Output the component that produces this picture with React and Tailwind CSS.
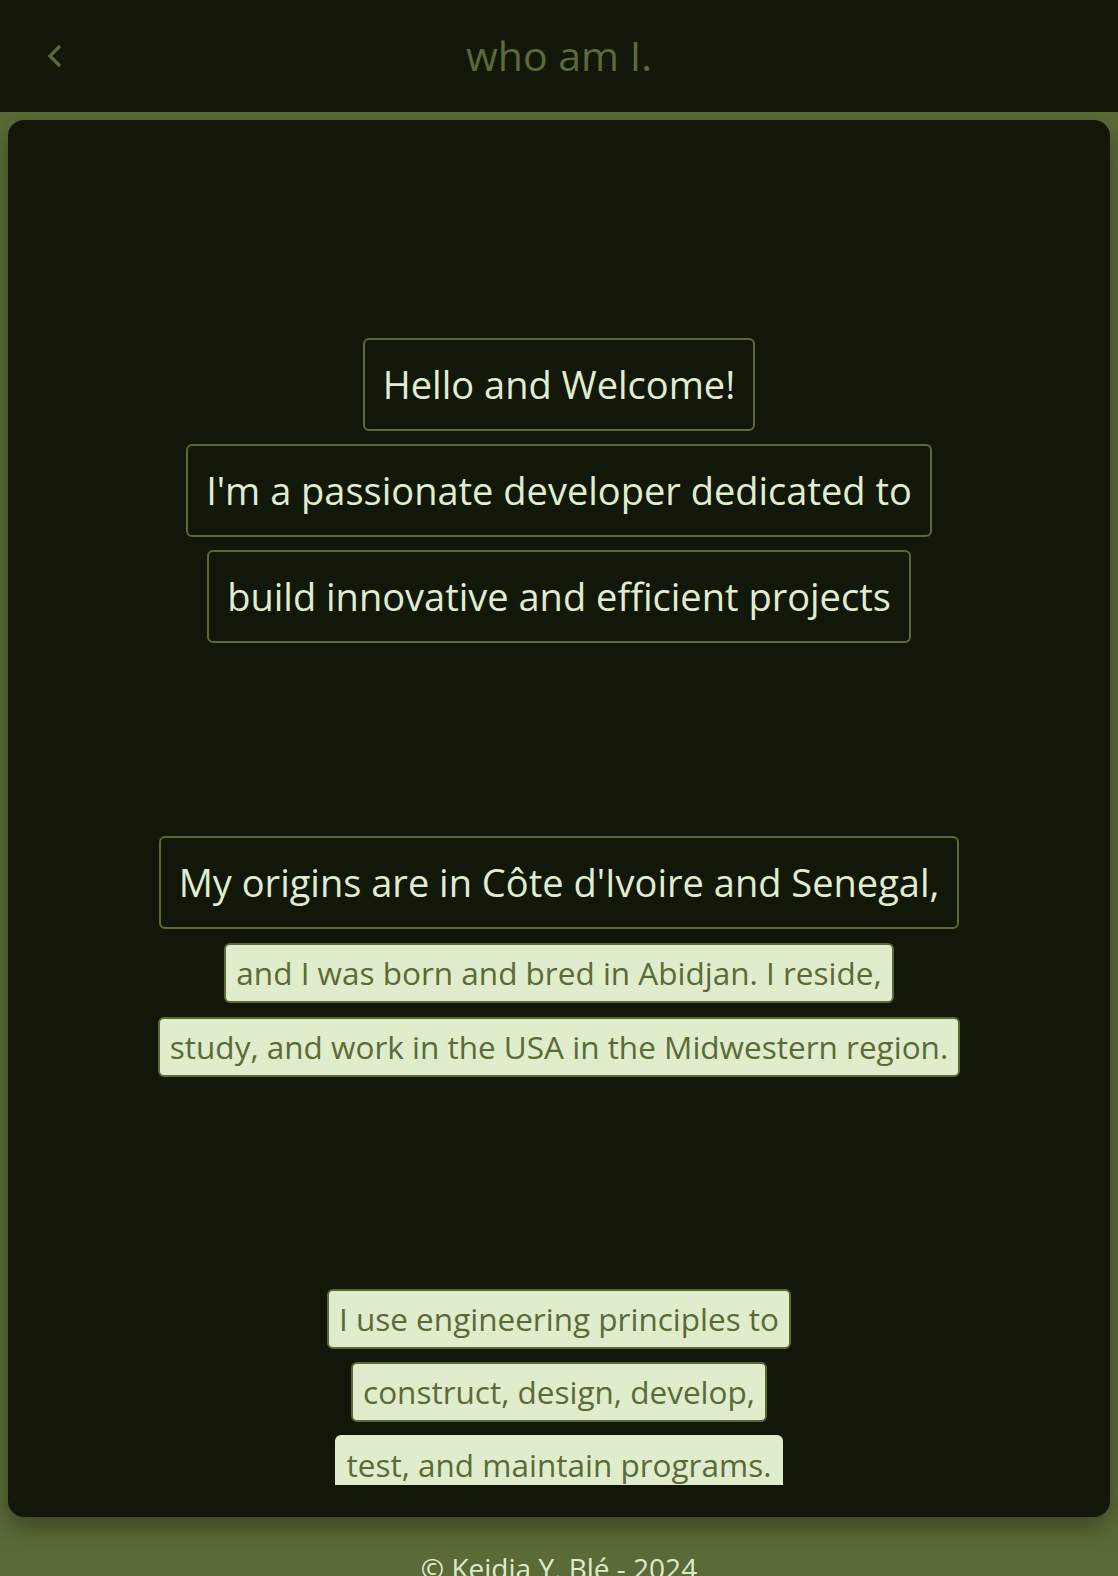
import React from 'react';

const FONT = { fontFamily: '"Open Sans", "Noto Sans", sans-serif' };

function BackIcon() {
  return (
    <svg width="16" height="24" viewBox="0 0 16 24" fill="none">
      <path d="M14 2 L4 12 L14 22" stroke="#5a6b37" strokeWidth="3.2" />
    </svg>
  );
}

function BigLine({ children }) {
  return (
    <div className="border-2 border-[#5a6b37] rounded-md px-[18px] py-[17px] text-[38px] leading-[55px] text-[#e2edcf] whitespace-nowrap">
      {children}
    </div>
  );
}

function SmallLine({ children, bare }) {
  return (
    <div
      className={
        'rounded-[6px] px-[10px] py-[8px] text-[31.5px] leading-[40px] bg-[#e0edcd] text-[#5a6b37] whitespace-nowrap border-2 ' +
        (bare ? 'border-[#e0edcd] rounded-b-none' : 'border-[#5a6b37]')
      }
    >
      {children}
    </div>
  );
}

export default function App() {
  return (
    <div className="w-full min-h-screen bg-[#5a6b37]" style={FONT}>
      <header className="h-[112px] bg-[#111709] flex items-center relative">
        <button className="absolute left-[46px] top-[44px] p-0">
          <BackIcon />
        </button>
        <div className="flex-1 text-center text-[41px] text-[#5a6b37]">
          who am I.
        </div>
      </header>

      <main className="p-2">
        <div className="h-[1397px] bg-[#111709] rounded-2xl p-8 shadow-[0_10px_24px_rgba(0,0,0,0.35)]">
          <div className="h-full overflow-hidden flex flex-col items-center">
            <div className="mt-[186px] flex flex-col items-center gap-[13px]">
              <BigLine>Hello and Welcome!</BigLine>
              <BigLine>I'm a passionate developer dedicated to</BigLine>
              <BigLine>build innovative and efficient projects</BigLine>
            </div>

            <div className="mt-[193px] flex flex-col items-center gap-[14px]">
              <BigLine>My origins are in Côte d'Ivoire and Senegal,</BigLine>
              <SmallLine>and I was born and bred in Abidjan. I reside,</SmallLine>
              <SmallLine>study, and work in the USA in the Midwestern region.</SmallLine>
            </div>

            <div className="mt-[212px] flex flex-col items-center gap-[13px]">
              <SmallLine>I use engineering principles to</SmallLine>
              <SmallLine>construct, design, develop,</SmallLine>
              <SmallLine bare>test, and maintain programs.</SmallLine>
            </div>
          </div>
        </div>
      </main>

      <footer className="pt-[22px] pb-6 text-center text-[28px] leading-[42px] text-[#dfeacb]">
        © Keidja Y. Blé - 2024
      </footer>
    </div>
  );
}
